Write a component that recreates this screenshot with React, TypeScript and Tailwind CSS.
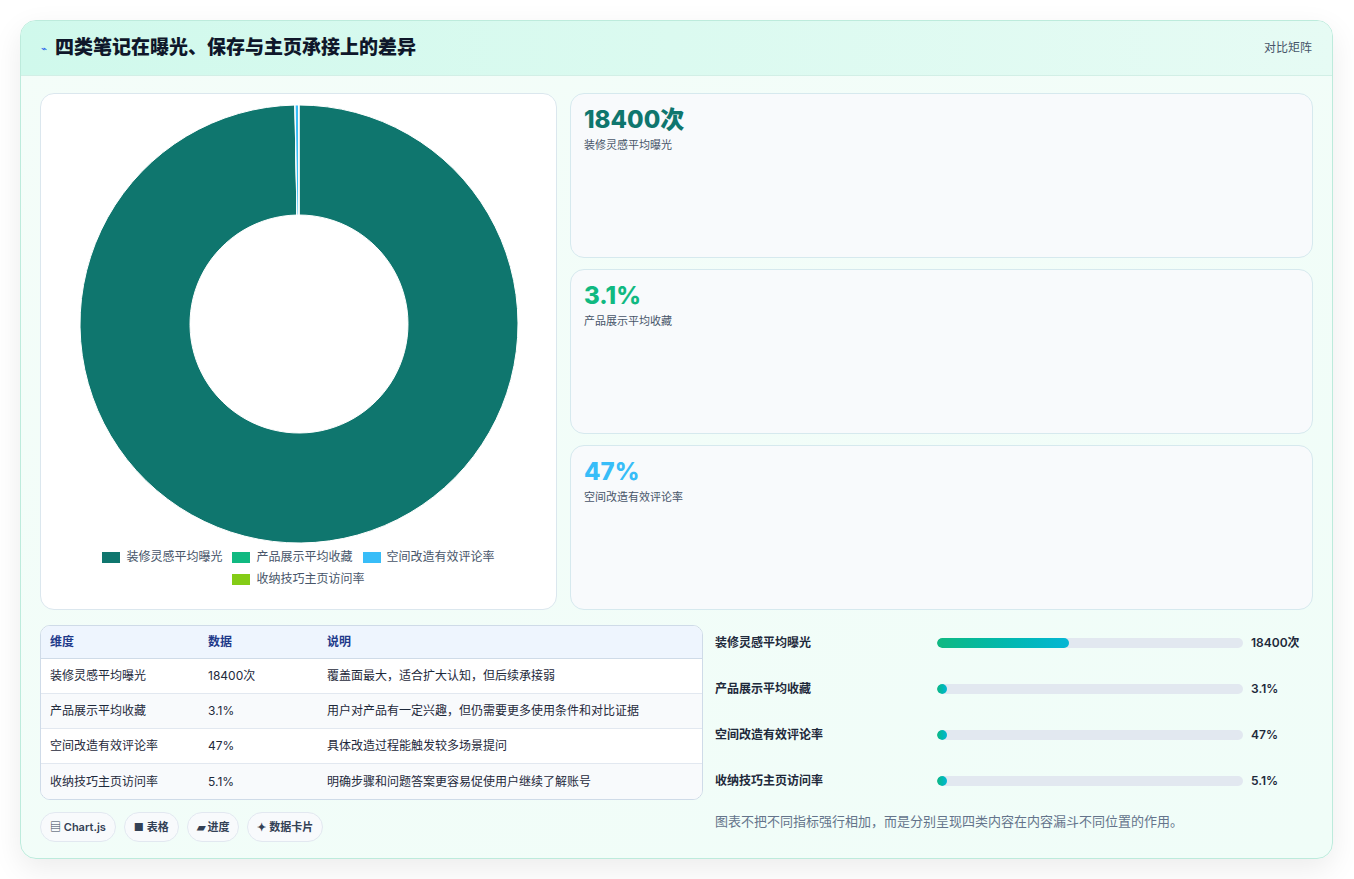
import React from "react";

const data = [
  { label: "装修灵感平均曝光", v: 18400, c: "#0f766e" },
  { label: "产品展示平均收藏", v: 3.1, c: "#10b981" },
  { label: "空间改造有效评论率", v: 47, c: "#38bdf8" },
  { label: "收纳技巧主页访问率", v: 5.1, c: "#84cc16" },
];

function Donut() {
  const total = data.reduce((a, b) => a + b.v, 0);
  const cx = 219, cy = 219, R = 219, r = 109;
  let a0 = -Math.PI / 2;
  const paths = data.map((d) => {
    const a1 = a0 + (d.v / total) * Math.PI * 2;
    const large = a1 - a0 > Math.PI ? 1 : 0;
    const p = (ang: number, rad: number) => `${cx + rad * Math.cos(ang)} ${cy + rad * Math.sin(ang)}`;
    const path = `M ${p(a0, R)} A ${R} ${R} 0 ${large} 1 ${p(a1, R)} L ${p(a1, r)} A ${r} ${r} 0 ${large} 0 ${p(a0, r)} Z`;
    a0 = a1;
    return <path key={d.label} d={path} fill={d.c} stroke="#fff" strokeWidth={1} />;
  });
  return <svg width={438} height={438} viewBox="0 0 438 438">{paths}</svg>;
}

const rows = [
  ["装修灵感平均曝光", "18400次", "覆盖面最大，适合扩大认知，但后续承接弱"],
  ["产品展示平均收藏", "3.1%", "用户对产品有一定兴趣，但仍需要更多使用条件和对比证据"],
  ["空间改造有效评论率", "47%", "具体改造过程能触发较多场景提问"],
  ["收纳技巧主页访问率", "5.1%", "明确步骤和问题答案更容易促使用户继续了解账号"],
];

export default function App() {
  return (
    <div className="min-h-screen bg-white p-[20px] pr-[20px]" style={{ fontFamily: "Inter, 'Noto Sans CJK SC', sans-serif" }}>
      <div className="w-[1313px] rounded-[16px] border border-[#bdebdc] bg-gradient-to-br from-[#f4fdf9] to-[#f0fdf8] shadow-[0_10px_30px_rgba(0,0,0,0.08)] overflow-hidden">
        <div className="h-[55px] flex items-center justify-between px-[20px] bg-gradient-to-r from-[#d0f9ec] to-[#e6fbf4] border-b border-[#d2efe6]">
          <div className="flex items-center gap-[8px]">
            <span className="text-[10px] text-[#2563eb]">⌁</span>
            <span className="text-[19px] font-extrabold text-[#0f172a]">四类笔记在曝光、保存与主页承接上的差异</span>
          </div>
          <span className="text-[12px] text-[#475569]">对比矩阵</span>
        </div>
        <div className="px-[19px] pt-[17px] pb-[16px]">
          <div className="flex gap-[13px]">
            <div className="w-[517px] h-[517px] bg-white rounded-[14px] border border-[#dbe7ee] flex flex-col items-center pt-[11px]">
              <Donut />
              <div className="mt-[6px] flex flex-wrap justify-center gap-x-[10px] gap-y-[6px] w-[420px] text-[12px] text-[#475569]">
                {data.map((d) => (
                  <div key={d.label} className="flex items-center gap-[6px] h-[16px]">
                    <span className="w-[18px] h-[11px]" style={{ background: d.c }} />
                    {d.label}
                  </div>
                ))}
              </div>
            </div>
            <div className="flex-1 flex flex-col gap-[11px]">
              {[
                ["18400次", "#0f766e", "装修灵感平均曝光"],
                ["3.1%", "#10b981", "产品展示平均收藏"],
                ["47%", "#38bdf8", "空间改造有效评论率"],
              ].map(([v, c, l]) => (
                <div key={l} className="h-[165px] rounded-[14px] border border-[#d6e9ee] bg-[#f8fafc] px-[13px] pt-[10px]">
                  <div className="text-[24px] font-extrabold leading-[32px]" style={{ color: c }}>{v}</div>
                  <div className="text-[11px] text-[#475569] mt-[1px]">{l}</div>
                </div>
              ))}
            </div>
          </div>
          <div className="flex gap-[12px] mt-[15px]">
            <div className="w-[663px]">
              <div className="rounded-[10px] border border-[#cfdbe8] overflow-hidden bg-white text-[12px]">
                <div className="flex h-[33px] items-center bg-[#eef5fe] border-b border-[#cfdbe8] text-[#1e3a8a] font-semibold">
                  <div className="w-[167px] pl-[9px]">维度</div>
                  <div className="w-[119px]">数据</div>
                  <div className="flex-1">说明</div>
                </div>
                {rows.map((r, i) => (
                  <div key={i} className={`flex h-[35px] items-center text-[#1e293b] ${i % 2 ? "bg-[#f8fafc]" : "bg-white"} ${i < 3 ? "border-b border-[#e2e8f0]" : ""}`}>
                    <div className="w-[167px] pl-[9px]">{r[0]}</div>
                    <div className="w-[119px]">{r[1]}</div>
                    <div className="flex-1">{r[2]}</div>
                  </div>
                ))}
              </div>
              <div className="flex gap-[8px] mt-[12px] text-[11px] font-semibold text-[#334155]">
                {["▤ Chart.js", "■ 表格", "▰ 进度", "✦ 数据卡片"].map((t) => (
                  <span key={t} className="h-[30px] px-[9px] rounded-full border border-[#e2e8f0] bg-[#f8fafc] flex items-center">{t}</span>
                ))}
              </div>
            </div>
            <div className="flex-1 pr-[10px] -mt-[5px]">
              {[["装修灵感平均曝光", "18400次", 43], ["产品展示平均收藏", "3.1%", 0], ["空间改造有效评论率", "47%", 0], ["收纳技巧主页访问率", "5.1%", 0]].map(([l, v, w]) => (
                <div key={l as string} className="flex items-center h-[46px] text-[12px] font-semibold text-[#1e293b]">
                  <div className="w-[222px]">{l}</div>
                  <div className="w-[306px] h-[10px] rounded-full bg-[#e2e8f0] overflow-hidden">
                    <div className="h-full rounded-full bg-gradient-to-r from-[#10b981] to-[#06b6d4] min-w-[10px]" style={{ width: `${w}%` }} />
                  </div>
                  <div className="ml-[8px]">{v}</div>
                </div>
              ))}
              <div className="mt-[8px] text-[13px] text-[#64748b]">图表不把不同指标强行相加，而是分别呈现四类内容在内容漏斗不同位置的作用。</div>
            </div>
          </div>
        </div>
      </div>
    </div>
  );
}
